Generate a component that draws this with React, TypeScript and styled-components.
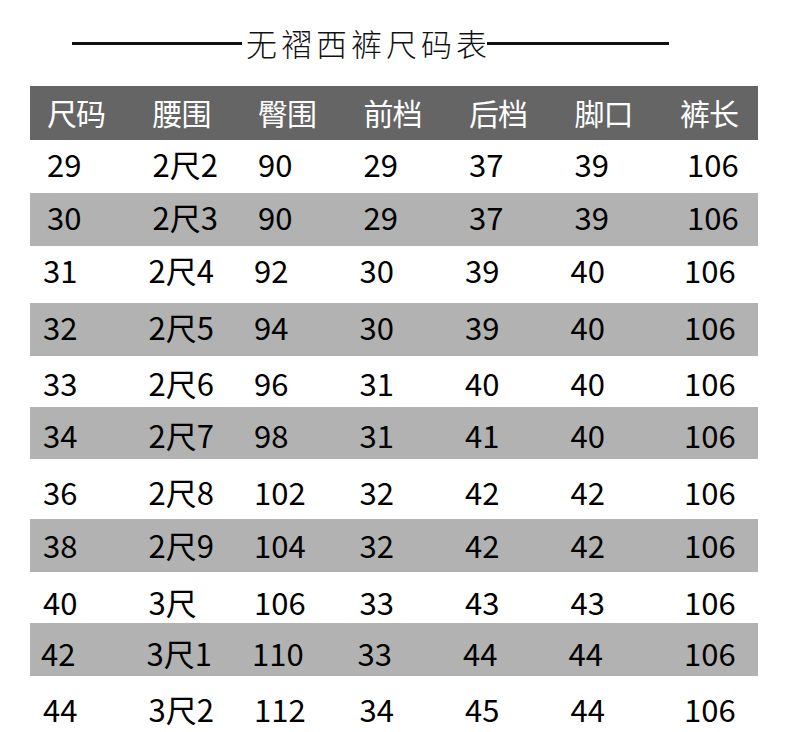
import React from 'react';
import styled, { createGlobalStyle } from 'styled-components';

const GlobalStyle = createGlobalStyle`
  html, body {
    margin: 0;
    padding: 0;
    background: #ffffff;
  }
  body {
    font-family: "Noto Sans CJK SC", "Noto Sans", sans-serif;
    overflow: hidden;
  }
`;

const Page = styled.div`
  width: 790px;
  height: 732px;
  overflow: hidden;
  background: #ffffff;
`;

const TitleBar = styled.div`
  height: 86px;
  display: flex;
  align-items: center;
  padding-left: 72px;
  box-sizing: border-box;
  padding-bottom: 1px;
`;

const Rule = styled.div<{ $w: number }>`
  width: ${(p) => p.$w}px;
  height: 3px;
  background: #111111;
  margin-top: 1px;
`;

const TitleText = styled.h1`
  margin: 0;
  width: 245px;
  font-size: 31px;
  font-weight: 300;
  letter-spacing: 4px;
  line-height: 1;
  color: #111111;
  text-align: center;
  white-space: nowrap;
  padding-left: 4px;
  box-sizing: border-box;
`;

const Table = styled.div`
  margin-left: 30px;
  width: 728px;
  display: flex;
  flex-direction: column;
`;

const Row = styled.div<{ $h: number; $bg: string; $pl: number; $dy: number }>`
  height: ${(p) => p.$h}px;
  background: ${(p) => p.$bg};
  display: grid;
  grid-template-columns: repeat(6, 105.5px) 1fr;
  align-items: center;
  box-sizing: border-box;
  padding-left: ${(p) => p.$pl}px;
  padding-top: ${(p) => Math.max(0, p.$dy * 2)}px;
  padding-bottom: ${(p) => Math.max(0, -p.$dy * 2)}px;
`;

const HeadCell = styled.div`
  font-size: 30px;
  line-height: 1;
  color: #ffffff;
  white-space: nowrap;
  letter-spacing: -1px;
`;

const Cell = styled.div<{ $shift?: number }>`
  font-size: 31px;
  font-weight: 400;
  line-height: 1;
  color: #000000;
  white-space: nowrap;
  padding-left: ${(p) => p.$shift ?? 0}px;
`;

const headers = ['尺码', '腰围', '臀围', '前档', '后档', '脚口', '裤长'];

type SizeRow = { cells: string[]; h: number; pl: number; dy: number; last: number };

const rows: SizeRow[] = [
  { cells: ['29', '2尺2', '90', '29', '37', '39', '106'], h: 53, pl: 17, dy: -3, last: 7 },
  { cells: ['30', '2尺3', '90', '29', '37', '39', '106'], h: 53, pl: 17, dy: -3, last: 7 },
  { cells: ['31', '2尺4', '92', '30', '39', '40', '106'], h: 57, pl: 13, dy: -5, last: 8 },
  { cells: ['32', '2尺5', '94', '30', '39', '40', '106'], h: 53, pl: 13, dy: -3, last: 8 },
  { cells: ['33', '2尺6', '96', '31', '40', '40', '106'], h: 51, pl: 13, dy: 1, last: 8 },
  { cells: ['34', '2尺7', '98', '31', '41', '40', '106'], h: 52, pl: 13, dy: 1, last: 8 },
  { cells: ['36', '2尺8', '102', '32', '42', '42', '106'], h: 60, pl: 13, dy: 2, last: 8 },
  { cells: ['38', '2尺9', '104', '32', '42', '42', '106'], h: 53, pl: 13, dy: -1, last: 8 },
  { cells: ['40', '3尺', '106', '33', '43', '43', '106'], h: 51, pl: 13, dy: 4, last: 8 },
  { cells: ['42', '3尺1', '110', '33', '44', '44', '106'], h: 53, pl: 11, dy: 3, last: 10 },
  { cells: ['44', '3尺2', '112', '34', '45', '44', '106'], h: 56, pl: 13, dy: 4, last: 8 },
];

const App = () => {
  return (
    <Page>
      <GlobalStyle />
      <TitleBar>
        <Rule $w={170} />
        <TitleText>无褶西裤尺码表</TitleText>
        <Rule $w={182} />
      </TitleBar>
      <Table>
        <Row $h={54} $bg="#656565" $pl={17} $dy={-1}>
          {headers.map((h) => (
            <HeadCell key={h}>{h}</HeadCell>
          ))}
        </Row>
        {rows.map((r, i) => (
          <Row key={r.cells[0]} $h={r.h} $bg={i % 2 === 1 ? '#b2b2b2' : '#ffffff'} $pl={r.pl} $dy={r.dy}>
            {r.cells.map((c, j) => (
              <Cell key={j} $shift={j === 6 ? r.last : 0}>
                {c}
              </Cell>
            ))}
          </Row>
        ))}
      </Table>
    </Page>
  );
};

export default App;
